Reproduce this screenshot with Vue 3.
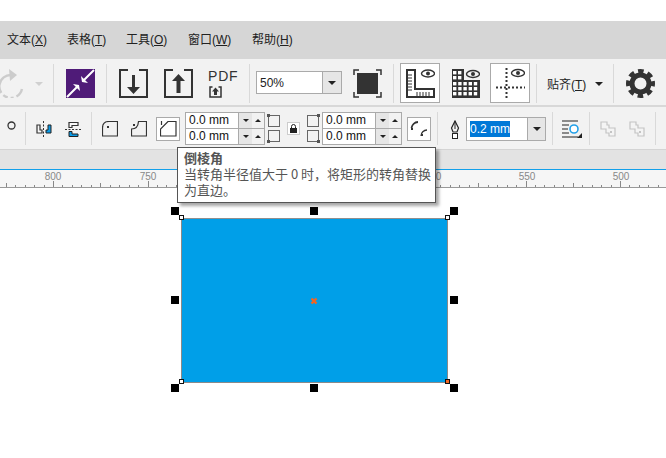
<script setup>
const menus = [
  { t: '文本', k: 'X', c: 'm-a' },
  { t: '表格', k: 'T', c: 'm-b' },
  { t: '工具', k: 'O', c: 'm-c' },
  { t: '窗口', k: 'W', c: 'm-d' },
  { t: '帮助', k: 'H', c: 'm-e' }
]
const step = 94.5 / 10
const ticks = []
for (let i = -5; i < 72; i++) {
  const x = 53 + i * step
  const major = ((i % 10) + 10) % 10 === 0
  const mid = ((i % 5) + 5) % 5 === 0
  ticks.push({ x: Math.round(x) + 0.5, y: major ? 181 : mid ? 183 : 185 })
}
const labels = [
  { n: '800', x: 53 },
  { n: '750', x: 148 },
  { n: '0', x: 438.5 },
  { n: '550', x: 527 },
  { n: '500', x: 621 }
]
const handles = [
  [171, 207], [310, 207], [450, 207],
  [171, 296], [450, 296],
  [171, 384], [310, 384], [450, 384]
].map(([x, y]) => ({ left: x + 'px', top: y - 188 + 'px' }))
const spinA = ['0.0 mm', '0.0 mm']
const cells = []
for (let r = 0; r < 2; r++) for (let c = 0; c < 2; c++) cells.push({ x: 2 + c * 5, y: 2 + r * 5 })
for (let r = 0; r < 3; r++) for (let c = 0; c < 5; c++) cells.push({ x: 2 + c * 5.2, y: 13 + r * 5 })
</script>

<template>
  <div class="page">
    <div class="top"></div>
    <div class="menu">
      <span v-for="m in menus" :key="m.k" :class="m.c">{{ m.t }}(<u>{{ m.k }}</u>)</span>
    </div>

    <div class="bar1">
      <svg class="redo" width="44" height="29" viewBox="0 0 44 29">
        <path d="M13 6A11.500 11.500 0 1 0 23 20" fill="none" stroke="#ccc" stroke-width="2.400" stroke-dasharray="26 3 5 3 3 3" />
        <path d="M10 0 18 6 11 12Z" fill="#ccc" />
        <path d="M36 13h8l-4 4z" fill="#d0d0d0" />
      </svg>
      <i class="sep s1"></i>
      <svg class="i29 g12" viewBox="0 0 29 29">
        <rect width="29" height="29" fill="#4f1b78" />
        <path d="M1 28 11 18M28 1 18 11" stroke="#fff" stroke-width="2" />
        <path d="M13 16 7 15 14 22ZM16 13 22 14 15 7Z" fill="#fff" />
      </svg>
      <i class="sep g11"></i>
      <svg class="i29 g12" viewBox="0 0 29 29">
        <path d="M9 1H1V28H28V1H20" fill="none" stroke="#333" stroke-width="2" />
        <path d="M13 6h3v12h5l-6.500 7L8 18h5z" fill="#333" />
      </svg>
      <svg class="i29 g16" viewBox="0 0 29 29">
        <path d="M9 1H1V28H28V1H20" fill="none" stroke="#333" stroke-width="2" />
        <path d="M12.500 24V12H8L14.500 5 21 12h-4.500v12z" fill="#333" />
      </svg>
      <div class="pdf g15">
        <span>PDF</span>
        <svg width="13" height="12" viewBox="0 0 13 12">
          <path d="M3.500 1H1V11H12V1H9.500" fill="none" stroke="#333" stroke-width="1.500" />
          <path d="M6.500 1.500 10 5.500H8V9H5V5.500H3Z" fill="#333" />
        </svg>
      </div>
      <i class="sep g11"></i>
      <div class="combo zoomc">
        <span>50%</span>
        <b class="dd"><i class="down"></i></b>
      </div>
      <svg class="i29 g11" viewBox="0 0 29 29">
        <rect x="4" y="4" width="21" height="21" fill="#333" />
        <path d="M1 6V1H6M23 1H28V6M28 23V28H23M6 28H1V23" fill="none" stroke="#333" stroke-width="1.500" />
      </svg>
      <i class="sep g11"></i>
      <div class="tbtn g6">
        <svg width="30" height="29" viewBox="0 0 30 29">
          <path d="M2 1H10V20H29V28H2Z" fill="#fff" stroke="#333" stroke-width="2" />
          <path d="M3 6h4M3 9h4M3 12h4M3 15h4M3 18h4M3 21h4M12 27v-4M15 27v-4M18 27v-4M21 27v-4M24 27v-4" stroke="#333" />
          <ellipse cx="23" cy="4.500" rx="6.500" ry="3.500" fill="none" stroke="#333" stroke-width="1.400" />
          <circle cx="23" cy="4.500" r="2" fill="#333" />
        </svg>
      </div>
      <svg class="i29 g11" viewBox="0 0 29 29">
        <path d="M1 0H13V11H29V29H1Z" fill="#333" />
        <rect v-for="(c, i) in cells" :key="i" :x="c.x" :y="c.y" width="3.400" height="3.400" fill="#fff" />
        <ellipse cx="22" cy="5" rx="6.500" ry="3.500" fill="#f2f2f2" stroke="#333" stroke-width="1.400" />
        <circle cx="22" cy="5" r="2" fill="#333" />
      </svg>
      <div class="tbtn g10">
        <svg width="29" height="30" viewBox="0 0 29 30">
          <path d="M10.500 0V30M0 19.500H29" stroke="#333" stroke-width="2" stroke-dasharray="2 2" fill="none" />
          <ellipse cx="22" cy="5" rx="6.500" ry="3.500" fill="none" stroke="#333" stroke-width="1.400" />
          <circle cx="22" cy="5" r="2" fill="#333" />
        </svg>
      </div>
      <i class="sep g6"></i>
      <span class="snap">贴齐(<u>T</u>)</span>
      <i class="down g8"></i>
      <i class="sep g10b"></i>
      <svg class="i29 g12" viewBox="0 0 29 29">
        <circle cx="14.500" cy="14.500" r="8.500" fill="none" stroke="#333" stroke-width="5" />
        <circle cx="14.500" cy="14.500" r="12" fill="none" stroke="#333" stroke-width="5" stroke-dasharray="5.420 4" stroke-dashoffset="2.710" />
      </svg>
    </div>

    <div class="bar2">
      <svg class="dot" width="9" height="9" viewBox="0 0 9 9"><circle cx="4.500" cy="4.500" r="3.500" fill="none" stroke="#333" stroke-width="1.300" /></svg>
      <i class="sep2 r1"></i>
      <svg class="i16 r2" viewBox="0 0 16 16">
        <path d="M1 4H4V9H6V12H1Z" fill="#f8f8f8" stroke="#333" stroke-width="1.200" />
        <path d="M7.500 0V16" stroke="#333" stroke-dasharray="2 1.500" />
        <path d="M15 4V12H10V9H12V4Z" fill="#0b9ae6" stroke="#222" />
      </svg>
      <svg class="i16 r3" viewBox="0 0 16 16">
        <path d="M4 1.500H13V4.500H7V6.500H4Z" fill="#f8f8f8" stroke="#333" stroke-width="1.200" />
        <path d="M0 8.500H16" stroke="#333" stroke-dasharray="2 1.500" />
        <path d="M4 10.500H7V13H13V15.500H4Z" fill="#0b9ae6" stroke="#222" />
      </svg>
      <i class="sep2 r4"></i>
      <svg class="i16 r5" viewBox="0 0 16 16">
        <path d="M7 .500H15.500V15H.500V7Q.500 .500 7 .500Z" fill="none" stroke="#333" stroke-width="1.200" />
        <rect x="5" y="5" width="2" height="2" fill="#333" />
      </svg>
      <svg class="i16 r6" viewBox="0 0 16 16">
        <path d="M7.500 .500H15.500V15H.500V8Q7 8 7.500 .500Z" fill="none" stroke="#333" stroke-width="1.200" />
        <rect x="2" y="3" width="2" height="2" fill="#333" />
      </svg>
      <div class="pbtn r7">
        <svg width="17" height="16" viewBox="0 0 17 16">
          <path d="M8 .500H16V15H.500V8Z" fill="none" stroke="#333" stroke-width="1.200" />
          <path d="M1.500 0V4" stroke="#333" stroke-width="1.200" />
        </svg>
      </div>
      <div class="spin r8">
        <div v-for="(v, i) in spinA" :key="i" class="sr">
          <span class="val">{{ v }}</span>
          <b class="sbtn"><i class="tdown"></i></b>
          <b class="sbtn up"><i class="tup"></i></b>
        </div>
      </div>
      <div class="corners r9">
        <svg width="13" height="34" viewBox="0 0 13 34">
          <rect x="1.500" y="4.500" width="11" height="11" fill="none" stroke="#666" />
          <rect x="1.500" y="19.500" width="11" height="11" fill="none" stroke="#666" />
          <rect x="0" y="3" width="3" height="3" fill="#555" />
          <rect x="0" y="29" width="3" height="3" fill="#555" />
        </svg>
      </div>
      <div class="lock r10">
        <svg width="7" height="9" viewBox="0 0 7 9">
          <path d="M1.500 4V2.500a2 2 0 0 1 4 0V4" fill="none" stroke="#222" />
          <rect y="4" width="7" height="5" fill="#222" />
        </svg>
      </div>
      <div class="corners r11">
        <svg width="13" height="34" viewBox="0 0 13 34">
          <rect x="0.500" y="4.500" width="11" height="11" fill="none" stroke="#666" />
          <rect x="0.500" y="19.500" width="11" height="11" fill="none" stroke="#666" />
          <rect x="10" y="3" width="3" height="3" fill="#555" />
          <rect x="10" y="29" width="3" height="3" fill="#555" />
        </svg>
      </div>
      <div class="spin r12">
        <div v-for="(v, i) in spinA" :key="i" class="sr">
          <span class="val">{{ v }}</span>
          <b class="sbtn"><i class="tdown"></i></b>
          <b class="sbtn up"><i class="tup"></i></b>
        </div>
      </div>
      <div class="pbtn r13">
        <svg width="18" height="16" viewBox="0 0 18 16">
          <path d="M1.500 7A7 7 0 0 1 8 1" fill="none" stroke="#333" stroke-width="1.800" />
          <path d="M11 15A6 6 0 0 1 17 9" fill="none" stroke="#333" stroke-width="1.300" />
          <rect x="1" y="7" width="2" height="2" fill="#333" />
          <rect x="11" y="13" width="2" height="2" fill="#333" />
        </svg>
      </div>
      <i class="sep2 r14"></i>
      <svg class="pen r15" width="10" height="19" viewBox="0 0 10 19">
        <path d="M5 1 8.500 8 7 12H3L1.500 8Z" fill="none" stroke="#222" stroke-width="1.200" />
        <path d="M5 1V9" stroke="#222" />
        <rect x="2.500" y="13.500" width="5" height="5" fill="#fff" stroke="#222" />
      </svg>
      <div class="combo width r16">
        <span><em>0.2 mm</em></span>
        <b class="dd big"><i class="down"></i></b>
      </div>
      <i class="sep2 r17"></i>
      <svg class="r18" width="21" height="19" viewBox="0 0 21 19">
        <path d="M0 1H16M0 5H7M0 9H6M0 13H7M0 17H16" stroke="#222" stroke-width="1.200" />
        <circle cx="12" cy="9" r="4" fill="#fff" stroke="#22a0e8" stroke-width="1.600" />
        <path d="M20 13V18H15Z" fill="#222" />
      </svg>
      <i class="sep2 r19"></i>
      <svg class="i16 r20" viewBox="0 0 16 16">
        <path d="M1 1H7V4H9V7H15V15H9V12H6V8H1Z" fill="#f4f4f4" stroke="#c4c4c4" stroke-width="1.200" />
        <rect x="10" y="10" width="2" height="2" fill="#c4c4c4" />
      </svg>
      <svg class="i16 r21" viewBox="0 0 16 16">
        <path d="M1 1H7V4H9V7H15V15H9V12H6V8H1Z" fill="#f4f4f4" stroke="#c4c4c4" stroke-width="1.200" />
        <rect x="10" y="10" width="2" height="2" fill="#c4c4c4" />
      </svg>
      <i class="sep2 r22"></i>
    </div>

    <div class="band"></div>

    <svg class="ruler" width="666" height="18" viewBox="0 170 666 18">
      <rect x="0" y="170" width="666" height="17" fill="#f6f6f6" />
      <path d="M0 187.500H666" stroke="#999" />
      <line v-for="t in ticks" :key="t.x" :x1="t.x" :x2="t.x" :y1="t.y" y2="187" stroke="#888" />
      <text v-for="l in labels" :key="l.n" :x="l.x" y="180" class="rl" text-anchor="middle">{{ l.n }}</text>
    </svg>

    <div class="canvas">
      <div class="shape">
        <i class="node tl"></i><i class="node tr"></i><i class="node bl"></i><i class="node br"></i>
        <svg class="center" width="8" height="8" viewBox="0 0 8 8">
          <path d="M1.500 1.500 6.500 6.500M6.500 1.500 1.500 6.500" stroke="#f26522" stroke-width="2.400" />
        </svg>
      </div>
      <i v-for="(h, i) in handles" :key="i" class="handle" :style="h"></i>
    </div>

    <div class="tip">
      <strong>倒棱角</strong>
      <p>当转角半径值大于 0 时，将矩形的转角替换<br />为直边。</p>
    </div>
  </div>
</template>

<style>
html, body { margin: 0; background: #fff; overflow: hidden; }
</style>

<style scoped>
.page {
  position: relative;
  width: 666px;
  height: 458px;
  overflow: hidden;
  background: #fff;
  font-family: "Liberation Sans", "Noto Sans CJK SC", sans-serif;
  color: #222;
}
.top { height: 21px; }
.menu {
  height: 38px;
  background: #d6d6d6;
  display: flex;
  align-items: center;
  font-size: 12px;
  padding-bottom: 4px;
  box-sizing: border-box;
}
.menu span { white-space: nowrap; width: 40px; }
.m-a { margin-left: 7px; }
.m-b { margin-left: 20px; }
.m-c { margin-left: 19px; }
.m-d { margin-left: 22px; }
.m-e { margin-left: 24px; }

.bar1 {
  height: 48px;
  box-sizing: border-box;
  background: #f2f2f2;
  border-bottom: 2px solid #d8d8d8;
  display: flex;
  align-items: center;
  padding-top: 3px;
}
.bar1 > * { flex: none; }
.redo { margin-left: -1px; }
.sep { width: 1px; height: 39px; background: #d9d9d9; display: block; }
.s1 { margin-left: 10px; }
.i29 { width: 29px; height: 29px; display: block; }
.g12 { margin-left: 12px; }
.g11 { margin-left: 11px; }
.g16 { margin-left: 16px; }
.g15 { margin-left: 15px; }
.g10 { margin-left: 10px; }
.g6 { margin-left: 6px; }
.g8 { margin-left: 8px; }
.g10b { margin-left: 10px; }
.pdf {
  width: 30px;
  height: 29px;
  display: flex;
  flex-direction: column;
  align-items: flex-start;
  font: 14px/15px "Liberation Sans", sans-serif;
  letter-spacing: 0.800px;
  color: #333;
}
.pdf svg { margin: 2px 0 0 1px; }
.combo {
  box-sizing: border-box;
  background: #fff;
  border: 1px solid #aaa;
  display: flex;
  align-items: stretch;
  font-size: 12px;
}
.combo span { flex: 1; display: flex; align-items: center; padding-left: 3px; }
.zoomc { width: 86px; height: 23px; margin-left: 6px; margin-top: -2px; }
.dd {
  width: 18px;
  background: #e6e6e6;
  border-left: 1px solid #aaa;
  display: flex;
  align-items: center;
  justify-content: center;
}
.big { width: 17px; }
.down {
  display: block;
  width: 0;
  height: 0;
  border-left: 4px solid transparent;
  border-right: 4px solid transparent;
  border-top: 4px solid #222;
}
.tbtn {
  box-sizing: border-box;
  width: 40px;
  height: 40px;
  margin-top: -1px;
  background: #fff;
  border: 1px solid #aaa;
  display: flex;
  align-items: center;
  justify-content: center;
}
.snap { margin-left: 10px; width: 40px; font-size: 12px; white-space: nowrap; }

.bar2 {
  height: 42px;
  background: #f2f2f2;
  border-bottom: 1px solid #d4d4d4;
  display: flex;
  align-items: center;
}
.bar2 > * { flex: none; }
.sep2 { display: block; width: 1px; height: 33px; margin-top: 1px; background: #d9d9d9; }
.i16 { width: 16px; height: 16px; display: block; }
.dot { margin-left: 7px; margin-top: -5px; }
.r1 { margin-left: 9px; }
.r2 { margin-left: 10px; margin-top: 2px; }
.r3 { margin-left: 13px; margin-top: 2px; }
.r4 { margin-left: 10px; }
.r5 { margin-left: 10px; margin-top: 2px; }
.r6 { margin-left: 13px; margin-top: 2px; }
.pbtn {
  box-sizing: border-box;
  height: 24px;
  background: #fff;
  border: 1px solid #aaa;
  display: flex;
  align-items: center;
  justify-content: center;
}
.r7 { width: 24px; margin-left: 9px; margin-top: 2px; }
.spin {
  width: 80px;
  box-sizing: border-box;
  border: 1px solid #aaa;
  background: #aaa;
  display: flex;
  flex-direction: column;
  gap: 1px;
  margin-top: 1px;
}
.r8 { margin-left: 5px; }
.sr { display: flex; height: 15px; font-size: 12px; }
.val { flex: 1; background: #fff; padding-left: 3px; line-height: 15px; color: #111; }
.sbtn {
  width: 13px;
  background: #e6e6e6;
  border-left: 1px solid #aaa;
  display: flex;
  align-items: center;
  justify-content: center;
}
.sbtn.up { width: 12px; background: #f2f2f2; border-left: 0; }
.tdown, .tup {
  display: block;
  width: 0;
  height: 0;
  border-left: 3px solid transparent;
  border-right: 3px solid transparent;
}
.tdown { border-top: 3px solid #222; }
.tup { border-bottom: 3px solid #222; }
.corners { height: 34px; }
.r9 { margin-left: 2px; }
.lock {
  box-sizing: border-box;
  width: 13px;
  height: 13px;
  background: #fff;
  border: 1px solid #ccc;
  display: flex;
  align-items: center;
  justify-content: center;
}
.r10 { margin-left: 7px; margin-top: 1px; }
.r11 { margin-left: 7px; }
.r12 { margin-left: 2px; }
.r13 { width: 24px; margin-left: 5px; margin-top: 2px; }
.r14 { margin-left: 6px; }
.r15 { margin-left: 12px; margin-top: 2px; }
.width { width: 80px; height: 24px; margin-left: 6px; margin-top: 2px; }
.width span { padding-left: 3px; }
.width em { font-style: normal; background: #0078d7; color: #fff; padding: 1px 0; }
.r17 { margin-left: 6px; }
.r18 { margin-left: 9px; margin-top: 2px; }
.r19 { margin-left: 6px; }
.r20 { margin-left: 10px; margin-top: 2px; }
.r21 { margin-left: 13px; margin-top: 2px; }
.r22 { margin-left: 10px; }

.band {
  height: 19px;
  background: #e3e3e3;
  border-bottom: 1px solid #12a0ea;
}
.ruler { display: block; }
.rl { font: 10px "Liberation Sans", sans-serif; fill: #888; }

.canvas { position: relative; height: 270px; background: #fff; }
.shape {
  position: absolute;
  left: 181px;
  top: 30px;
  width: 267px;
  height: 165px;
  box-sizing: border-box;
  background: #009fe8;
  border: 1px solid #8a8a8a;
  border-top-color: #8f8f8f;
}
.center { position: absolute; left: 128px; top: 78px; }
.node {
  position: absolute;
  width: 3px;
  height: 3px;
  background: #fff;
  border: 1px solid #111;
}
.tl { left: -3px; top: -4px; }
.tr { right: -3px; top: -4px; }
.bl { left: -3px; bottom: -2px; }
.br { right: -3px; bottom: -2px; background: #f26522; }
.handle { position: absolute; width: 8px; height: 8px; background: #000; display: block; }

.tip {
  position: absolute;
  left: 177px;
  top: 147px;
  box-sizing: border-box;
  width: 259px;
  height: 56px;
  padding: 2px 6px;
  background: #fff;
  border: 1px solid #555;
  box-shadow: 3px 3px 3px rgba(0, 0, 0, 0.35);
  font-family: "Noto Sans CJK SC", sans-serif;
  font-size: 13px;
  line-height: 16px;
  color: #555;
}
.tip strong { display: block; font-weight: 700; }
.tip p { margin: 0; white-space: nowrap; }
</style>
